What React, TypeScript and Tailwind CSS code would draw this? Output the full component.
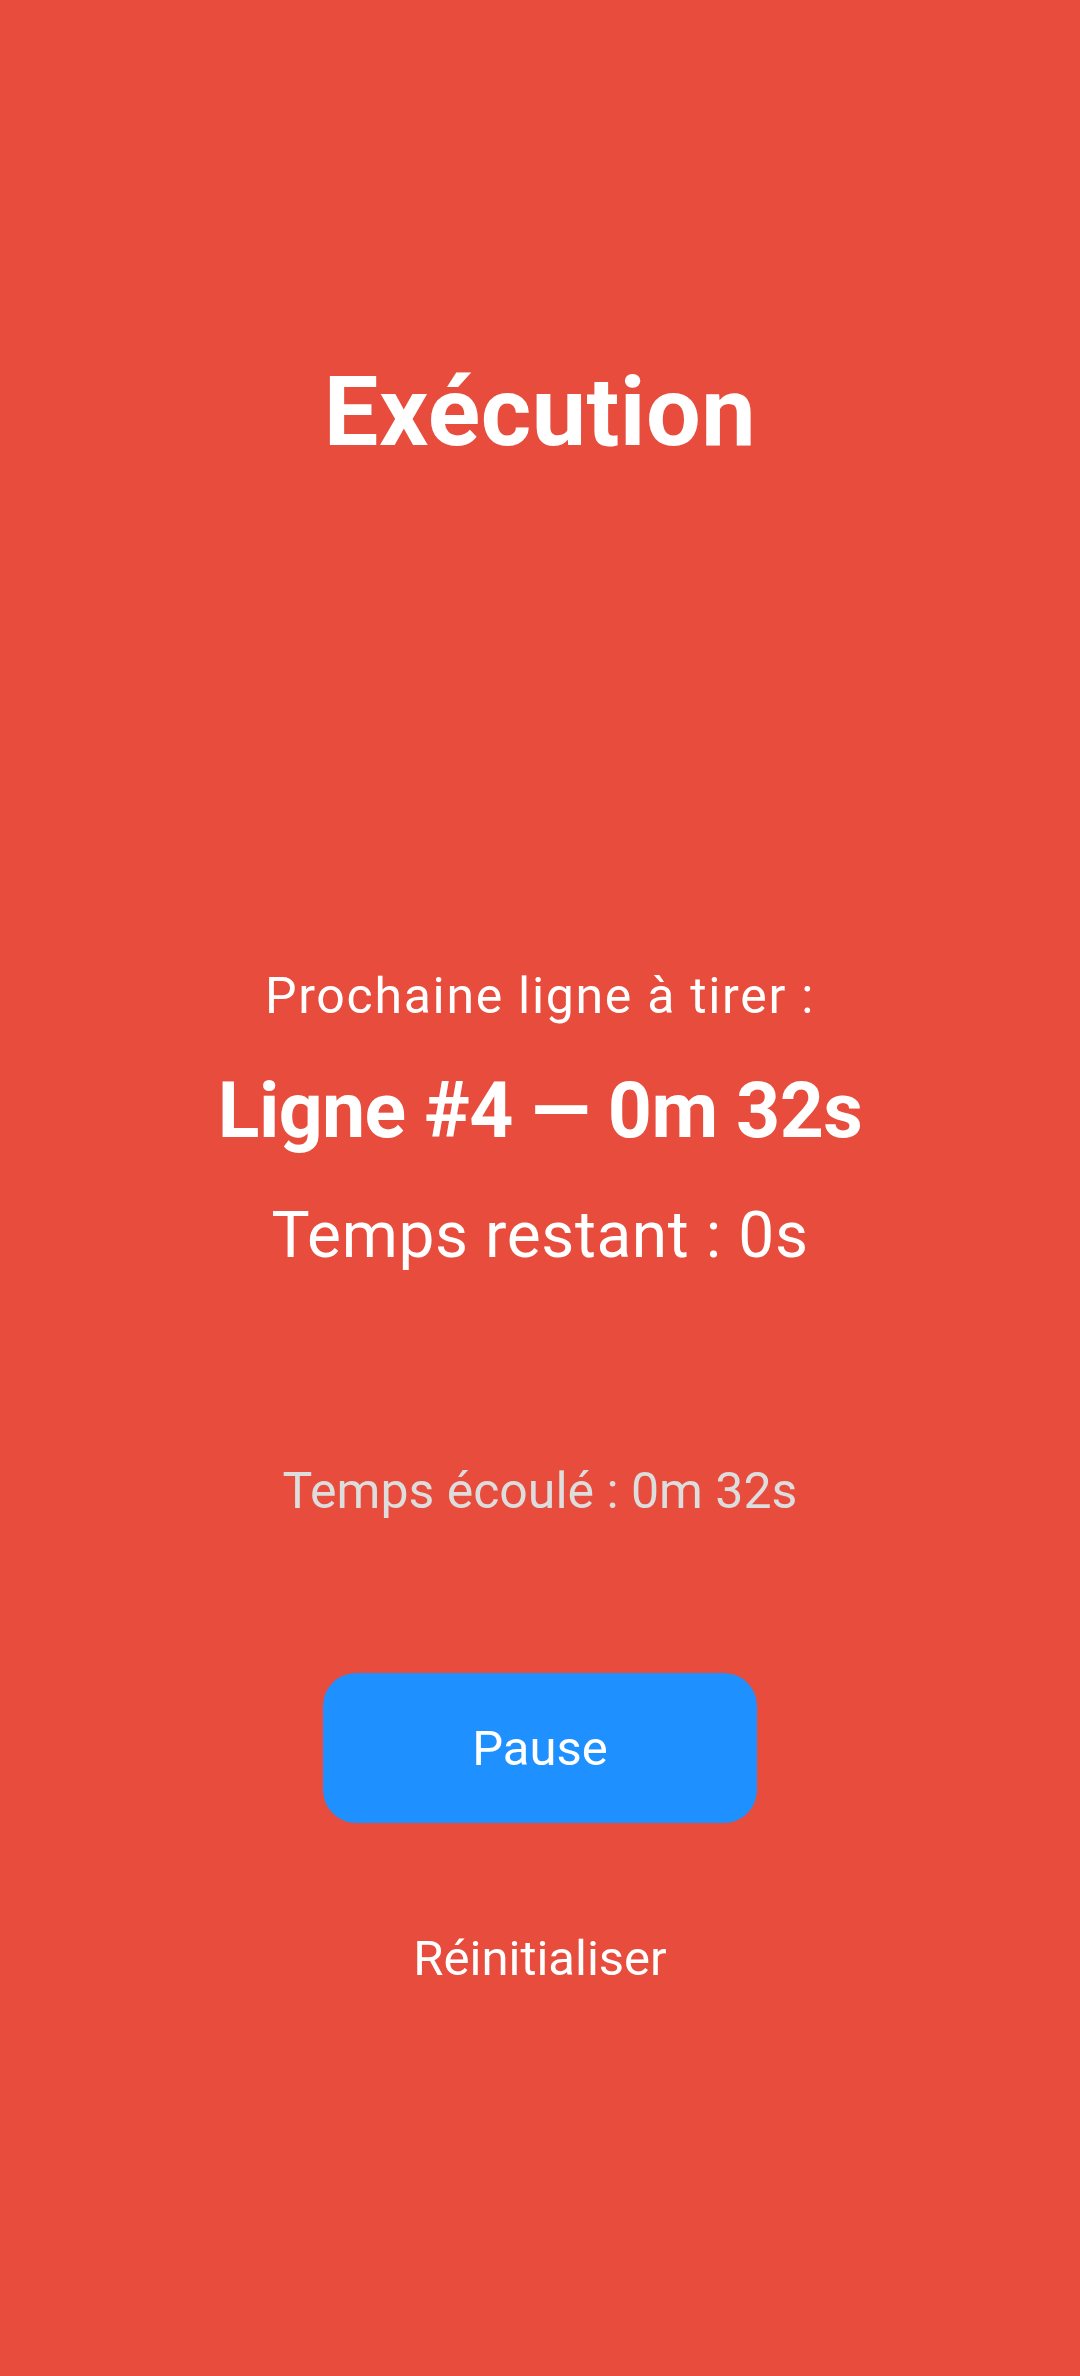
export default function App() {
  return (
    <div
      className="flex min-h-[2376px] w-full flex-col items-center bg-[#e74c3c] text-white"
      style={{ fontFamily: "Roboto, 'Noto Sans', sans-serif" }}
    >
      <h1 className="mt-[364px] text-[97px] font-bold leading-none tracking-[0.5px]">Exécution</h1>

      <p className="mt-[510px] text-[50px] leading-none tracking-[1.7px]">Prochaine ligne à tirer :</p>
      <p className="mt-[52px] text-[77px] font-bold leading-none tracking-[-0.6px]">Ligne #4 — 0m 32s</p>
      <p className="mt-[54px] text-[64px] leading-none tracking-[0.6px]">Temps restant : 0s</p>

      <p className="mt-[198px] text-[50px] leading-none text-[#dddddd]">Temps écoulé : 0m 32s</p>

      <button className="mt-[157px] flex h-[150px] w-[434px] items-center justify-center rounded-[33px] bg-[#1e90ff] text-[49px] leading-none text-white">
        Pause
      </button>

      <button className="mt-[111px] text-[49px] leading-none text-white">Réinitialiser</button>
    </div>
  );
}
